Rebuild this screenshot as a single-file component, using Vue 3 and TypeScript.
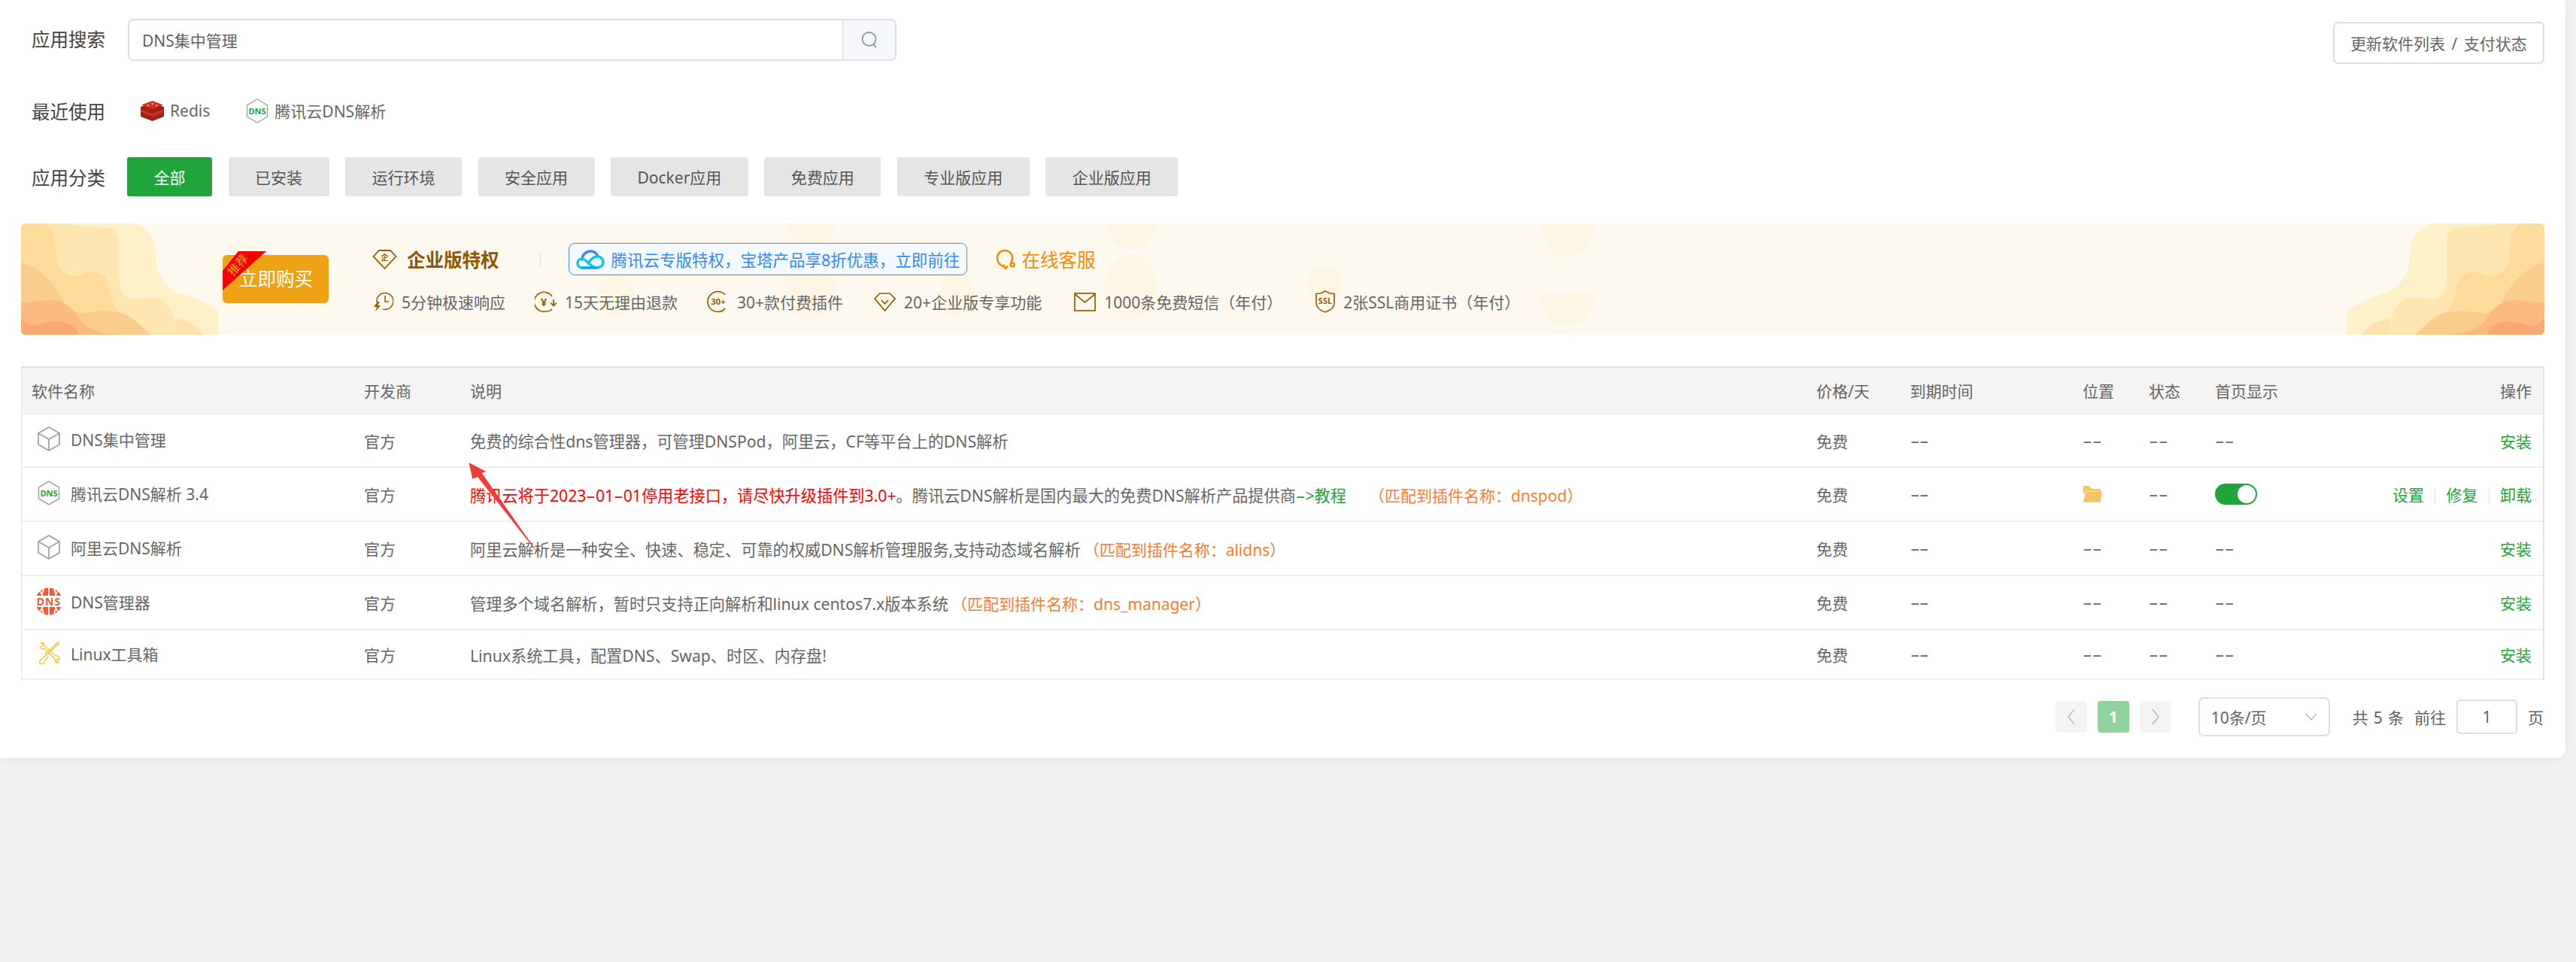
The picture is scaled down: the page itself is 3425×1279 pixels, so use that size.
<script setup lang="ts">
interface Part { text: string; kind?: 'red' | 'green' | 'orange' }
interface Row { icon: 'box' | 'dnsHex' | 'globe' | 'tools'; name: string; parts: Part[]; installed?: boolean }

const categories: string[] = ['全部', '已安装', '运行环境', '安全应用', 'Docker应用', '免费应用', '专业版应用', '企业版应用']
const headers: string[] = ['软件名称', '开发商', '说明', '价格/天', '到期时间', '位置', '状态', '首页显示', '操作']

const rows: Row[] = [
  { icon: 'box', name: 'DNS集中管理', parts: [{ text: '免费的综合性dns管理器，可管理DNSPod，阿里云，CF等平台上的DNS解析' }] },
  {
    icon: 'dnsHex', name: '腾讯云DNS解析 3.4', installed: true,
    parts: [
      { text: '腾讯云将于2023-01-01停用老接口，请尽快升级插件到3.0+', kind: 'red' },
      { text: '。腾讯云DNS解析是国内最大的免费DNS解析产品提供商' },
      { text: '->教程', kind: 'green' },
      { text: '（匹配到插件名称：dnspod）', kind: 'orange' }
    ]
  },
  {
    icon: 'box', name: '阿里云DNS解析',
    parts: [
      { text: '阿里云解析是一种安全、快速、稳定、可靠的权威DNS解析管理服务,支持动态域名解析' },
      { text: '（匹配到插件名称：alidns）', kind: 'orange' }
    ]
  },
  {
    icon: 'globe', name: 'DNS管理器',
    parts: [
      { text: '管理多个域名解析，暂时只支持正向解析和linux centos7.x版本系统' },
      { text: '（匹配到插件名称：dns_manager）', kind: 'orange' }
    ]
  },
  { icon: 'tools', name: 'Linux工具箱', parts: [{ text: 'Linux系统工具，配置DNS、Swap、时区、内存盘!' }] }
]

// The reference font draws a much wider hyphen, so hyphens get their own span.
const pieces = (text: string): string[] => text.split(/(-)/).filter((s) => s !== '')
</script>

<template>
  <div class="panel">
    <div class="search-row">
      <span class="label">应用搜索</span>
      <div class="search-box">
        <input class="search-input" type="text" value="DNS集中管理" />
        <span class="search-addon">
          <svg width="24" height="24" viewBox="0 0 24 24" fill="none" stroke="#8f979f" stroke-width="1.8">
            <circle cx="11.5" cy="11" r="9" />
            <path d="M17.5 18l3.5 4" />
          </svg>
        </span>
      </div>
      <button class="update-btn">更新软件列表 / 支付状态</button>
    </div>

    <div class="recent-row">
      <span class="label">最近使用</span>
      <span class="recent-item redis">
        <svg width="31" height="27" viewBox="0 0 31 27">
          <path d="M15.5 9L31 15v6l-15.500 6L0 21v-6z" fill="#a41e11" />
          <path d="M15.500 5L31 11v4l-15.500 6L0 15v-4z" fill="#c6302b" />
          <path d="M15.500 3L31 8v3l-15.500 6L0 11V8z" fill="#a41e11" />
          <path d="M15.500 0L30 5.500 15.500 11 1 5.500z" fill="#d82c20" />
          <path d="M14 3l3 .5-1.500 2zM20 5l3 1-3 1zM9 5l3 1-3 1z" fill="#fff" />
        </svg>
        Redis
      </span>
      <span class="recent-item tencent">
        <svg width="30" height="33" viewBox="0 0 30 33" fill="none">
          <path d="M15 1l13.500 8v15L15 32 1.500 24V9z" stroke="#a3a3a3" stroke-width="1.400" />
          <rect x="3" y="10" width="24" height="13" fill="#fff" />
          <text x="15" y="20.500" text-anchor="middle" class="dns-hex-text">DNS</text>
        </svg>
        腾讯云DNS解析
      </span>
    </div>

    <div class="category-row">
      <span class="label">应用分类</span>
      <div class="category-list">
        <button v-for="(c, i) in categories" :key="c" class="cat" :class="{ active: i === 0 }">{{ c }}</button>
      </div>
    </div>

    <div class="banner">
      <svg class="decor" width="3355" height="148" viewBox="0 0 3355 148" fill="#fef6e4">
        <ellipse cx="1049" cy="-10" rx="34" ry="45" />
        <ellipse cx="790" cy="95" rx="24" ry="30" />
        <ellipse cx="1243" cy="95" rx="24" ry="30" />
        <ellipse cx="1049" cy="85" rx="34" ry="44" />
        <ellipse cx="1476" cy="-10" rx="35" ry="46" />
        <ellipse cx="1476" cy="85" rx="35" ry="44" />
        <ellipse cx="1733" cy="80" rx="24" ry="24" />
        <ellipse cx="2056" cy="-5" rx="37" ry="50" />
        <path d="M2019 92h74c0 25-16 45-37 45s-37-20-37-45z" />
      </svg>
      <svg v-for="side in ['left', 'right']" :key="side" class="wave" :class="side" width="262" height="148" viewBox="0 0 262 148">
        <path d="M6 0H142C165 0 179 18 179 43C179 70 195 90 222 96C238 102 252 109 262 116V148H6a6 6 0 0 1-6-6V6a6 6 0 0 1 6-6z" fill="#fef1c9" />
        <path d="M55 0C75 3 90 5 106 5C122 5 130 10 130 25V70C130 90 137 101 150 101C160 101 168 97 182 100C198 105 205 122 205 148H6a6 6 0 0 1-6-6V6a6 6 0 0 1 6-6z" fill="#fee6b0" />
        <path d="M205 127C220 127 232 135 243 148H205z" fill="#fde2ad" />
        <path d="M24 0C40 0 46 15 46 36C46 58 56 70 72 70C84 70 88 62 99 65C112 68 115 75 117 88C122 110 135 135 171 148H6a6 6 0 0 1-6-6V6a6 6 0 0 1 6-6z" fill="#fddb9b" />
        <path d="M0 52C25 58 45 80 57 105C65 118 75 120 85 119C105 116 130 112 150 128C160 136 166 142 171 148H6a6 6 0 0 1-6-6z" fill="#fbcd8d" />
        <path d="M0 105C15 106 30 100 48 103C62 106 70 116 79 129C88 140 105 146 126 148H6a6 6 0 0 1-6-6z" fill="#fbba7f" />
        <path d="M0 126C6 134 14 138 21 136C30 132 40 131 48 131C62 131 74 136 76 148H6a6 6 0 0 1-6-6z" fill="#f8a873" />
      </svg>

      <div class="buy">
        <span class="ribbon"></span>
        <span class="ribbon-text">推荐</span>
        立即购买
      </div>

      <div class="perks">
        <div class="perks-top">
          <span class="perk-title">
            <svg width="33" height="26" viewBox="0 0 33 26" fill="none" stroke="#985c00" stroke-width="1.800">
              <path d="M1.500 9L9 1h15l7.500 8L16.500 25z" />
              <text x="16.500" y="14" text-anchor="middle" class="perk-glyph">企</text>
            </svg>
            企业版特权
          </span>
          <span class="divider"></span>
          <span class="tencent-chip">
            <svg width="38" height="26" viewBox="0 0 38 26" fill="none" stroke-width="3.500" stroke-linecap="round">
              <path d="M8 13C8 6 14 2 19.500 2C24 2 27 5 28.500 8" stroke="#2f8df6" />
              <path d="M8 24C4 24 2 21 2 18C2 15 4 12 8 12C13 12 20 24 27 24C32 24 36 21 36 16.500C36 12 32 9 28 9C22 9 19 14 16 18" stroke="#16c7de" />
              <path d="M8 24H27" stroke="#00a9f0" />
            </svg>
            腾讯云专版特权，宝塔产品享8折优惠，立即前往
          </span>
          <span class="service">
            <svg width="27" height="28" viewBox="0 0 27 28" fill="none" stroke="#f78b10" stroke-width="2.600">
              <path d="M12 24C5.500 22 2 17.500 2 12C2 6 6.500 2 12 2C17.500 2 22 6 22 12C22 14 21.500 16 20.500 17.500" stroke-linecap="round" />
              <circle cx="22" cy="21" r="2.500" />
              <path d="M10 21l3 5 3-3" />
            </svg>
            在线客服
          </span>
        </div>
        <div class="perks-bottom">
          <span class="perk">
            <svg width="28" height="28" viewBox="0 0 28 28" fill="none" stroke="#985c00" stroke-width="1.500">
              <path d="M6 15A11 11 0 1 1 14 24" />
              <path d="M17 6v8h5" />
              <path d="M7 14l-5 7h4l-2 6 7-8H7l3-5z" fill="#985c00" stroke="none" />
            </svg>
            5分钟极速响应
          </span>
          <span class="perk">
            <svg width="29" height="29" viewBox="0 0 29 29" fill="none" stroke="#985c00" stroke-width="1.700">
              <path d="M23 7A13 13 0 1 0 15 27C18 27 21 26 23 24" />
              <path d="M25 11v8M21 15.500l4 4 4-4" />
              <text x="12" y="20" text-anchor="middle" class="perk-glyph big">¥</text>
            </svg>
            15天无理由退款
          </span>
          <span class="perk">
            <svg width="29" height="30" viewBox="0 0 29 30" fill="none" stroke="#985c00" stroke-width="1.700">
              <path d="M24 6A13.500 13.500 0 0 0 15 1.500C7 1.500 1 8 1 15C1 23 7 28.500 15 28.500C19 28.500 22 27 24 24" />
              <text x="15" y="19" text-anchor="middle" class="perk-glyph bold">30+</text>
            </svg>
            30+款付费插件
          </span>
          <span class="perk">
            <svg width="29" height="25" viewBox="0 0 29 25" fill="none" stroke="#985c00" stroke-width="1.700">
              <path d="M1 8L8 1h13l7 7-13.500 16z" />
              <path d="M10 10l4.500 5 4.500-5" />
            </svg>
            20+企业版专享功能
          </span>
          <span class="perk">
            <svg width="29" height="25" viewBox="0 0 29 25" fill="none" stroke="#985c00" stroke-width="1.700">
              <rect x="1" y="1" width="27" height="23" />
              <path d="M1 2l13.500 11L28 2" />
            </svg>
            1000条免费短信（年付）
          </span>
          <span class="perk">
            <svg width="26" height="30" viewBox="0 0 26 30" fill="none" stroke="#985c00" stroke-width="1.600">
              <path d="M13 1l6 3 6 .5V17c0 6-6 10-12 12C7 27 1 23 1 17V4.500L7 4z" />
              <text x="13" y="18" text-anchor="middle" class="perk-glyph bold">SSL</text>
            </svg>
            2张SSL商用证书（年付）
          </span>
        </div>
      </div>
    </div>

    <div class="table">
      <div class="row head">
        <span v-for="(h, i) in headers" :key="h" class="cell" :class="{ first: i === 0, end: i === 8 }">{{ h }}</span>
      </div>
      <div v-for="r in rows" :key="r.name" class="row">
        <span class="cell first name">
          <svg v-if="r.icon === 'box'" width="30" height="33" viewBox="0 0 30 33" fill="none" stroke="#a0a0a0" stroke-width="1.700">
            <path d="M15 1l14 8v15l-14 8-14-8V9z" />
            <path d="M1 9l14 8 14-8M15 17v15" />
          </svg>
          <svg v-else-if="r.icon === 'dnsHex'" width="30" height="33" viewBox="0 0 30 33" fill="none">
            <path d="M15 1l13.500 8v15L15 32 1.500 24V9z" stroke="#a3a3a3" stroke-width="1.500" />
            <rect x="3" y="10" width="24" height="13" fill="#fff" />
            <text x="15" y="20.500" text-anchor="middle" class="dns-hex-text">DNS</text>
          </svg>
          <svg v-else-if="r.icon === 'globe'" class="globe" width="36" height="37" viewBox="0 0 36 37" fill="none">
            <circle cx="18" cy="18.500" r="18" fill="#f05a36" />
            <path d="M18 0v37M6 5c6 7 6 20 0 27M30 5c-6 7-6 20 0 27M11 2c-4 10-4 23 0 33M25 2c4 10 4 23 0 33" stroke="#fff" stroke-width="1.800" />
            <rect x="-1" y="11" width="38" height="15" fill="#fff" />
            <text x="18" y="24" text-anchor="middle" class="globe-text">DNS</text>
          </svg>
          <svg v-else class="tools" width="30" height="30" viewBox="0 0 30 30" fill="none" stroke="#f9c02c" stroke-width="1.300">
            <path d="M27 1l1.500 1.500L12 18l-2-1.500zM11.500 17.500L5 24a3 3 0 1 0 3.500 3.500L14 20" />
            <path d="M3 7.500A4 4 0 0 0 8.500 9L23 23a4 4 0 0 0 5 5l-3-3 1-2 3 1a4 4 0 0 0-5-5L9.500 6A4 4 0 0 0 5 1.500l2.500 2.500-1.500 2z" />
          </svg>
          <span class="name-text">{{ r.name }}</span>
        </span>
        <span class="cell">官方</span>
        <span class="cell desc">
          <span v-for="p in r.parts" :key="p.text" :class="p.kind"><template v-for="(s, k) in pieces(p.text)" :key="k"><span v-if="s === '-'" class="hy">-</span><template v-else>{{ s }}</template></template></span>
        </span>
        <span class="cell">免费</span>
        <span class="cell"><span class="hy">-</span><span class="hy">-</span></span>
        <span class="cell">
          <svg v-if="r.installed" class="folder" width="26" height="22" viewBox="0 0 26 22">
            <path d="M1 0h8l3 4h12v6H1z" fill="#f0c566" />
            <path d="M4 7h22l-2 15H1z" fill="#f0c566" stroke="#fbe6b7" stroke-width="1" />
          </svg>
          <template v-else><span class="hy">-</span><span class="hy">-</span></template>
        </span>
        <span class="cell"><span class="hy">-</span><span class="hy">-</span></span>
        <span class="cell">
          <span v-if="r.installed" class="switch"><span class="knob"></span></span>
          <template v-else><span class="hy">-</span><span class="hy">-</span></template>
        </span>
        <span class="cell end">
          <template v-if="r.installed">
            <a class="op">设置</a><i class="sep"></i><a class="op">修复</a><i class="sep"></i><a class="op">卸载</a>
          </template>
          <a v-else class="op">安装</a>
        </span>
      </div>
    </div>

    <div class="pager">
      <span class="page-btn">
        <svg width="12" height="24" viewBox="0 0 12 24" fill="none" stroke="#b0b3b9" stroke-width="1.300"><path d="M10 2L2 12l8 10" /></svg>
      </span>
      <span class="page-btn current">1</span>
      <span class="page-btn">
        <svg width="12" height="24" viewBox="0 0 12 24" fill="none" stroke="#b0b3b9" stroke-width="1.300"><path d="M2 2l8 10-8 10" /></svg>
      </span>
      <div class="page-select">
        <span>10条/页</span>
        <svg width="16" height="10" viewBox="0 0 16 10" fill="none" stroke="#b4b7bd" stroke-width="1.300"><path d="M1 1l7 8 7-8" /></svg>
      </div>
      <span class="total">共 5 条</span>
      <span class="goto">前往</span>
      <input class="page-input" type="text" value="1" />
      <span class="unit">页</span>
    </div>
  </div>

  <svg class="arrow" width="110" height="135" viewBox="0 0 110 135">
    <path d="M1.300 0L24 11.700 18.700 14 98 127 13 19 6.300 21.700z" fill="#f23b3b" />
  </svg>
</template>

<style>
html, body { margin: 0; background: #f0f0f0; }
body { min-height: 1279px; }
</style>

<style scoped>
.panel {
  box-sizing: border-box;
  width: 3411px;
  height: 1008px;
  padding: 25px 28px 0;
  background: #fff;
  border-radius: 0 0 12px 0;
  box-shadow: 0 2px 12px rgba(0, 0, 0, 0.05);
  font-family: "Noto Sans", "Noto Sans CJK SC", sans-serif;
  font-size: 21px;
  color: #666;
}
.label {
  flex: none;
  width: 142px;
  padding-left: 14px;
  box-sizing: border-box;
  font-size: 24.5px;
  color: #444;
}
.search-row { display: flex; align-items: flex-start; height: 56px; }
.search-row .label { line-height: 56px; }
.search-box {
  box-sizing: border-box;
  display: flex;
  width: 1022px;
  height: 56px;
  border: 2px solid #dcdfe6;
  border-radius: 7px;
  overflow: hidden;
}
.search-input {
  flex: 1;
  min-width: 0;
  border: 0;
  outline: 0;
  padding: 0 17px;
  font: inherit;
  color: #606266;
}
.search-addon {
  box-sizing: border-box;
  flex: none;
  width: 70px;
  display: flex;
  align-items: center;
  justify-content: center;
  background: #f5f7fa;
  border-left: 2px solid #e4e7ed;
}
.update-btn {
  margin: 4px 0 0 auto;
  box-sizing: border-box;
  width: 281px;
  height: 56px;
  border: 2px solid #dcdfe6;
  border-radius: 7px;
  background: #fff;
  padding: 0;
  font: inherit;
  word-spacing: 3px;
  color: #666;
}
.recent-row { display: flex; align-items: center; height: 44px; margin-top: 44px; }
.recent-item { display: inline-flex; align-items: center; }
.recent-item.redis { margin-left: 17px; gap: 8px; }
.recent-item.tencent { margin-left: 48px; gap: 8px; }
.category-row { display: flex; align-items: center; margin-top: 40px; }
.category-list { display: flex; gap: 21.5px; margin-left: -1px; }
.cat {
  height: 52px;
  padding: 0 35.5px;
  border: 0;
  border-radius: 3px;
  background: #e5e5e5;
  font: inherit;
  color: #555;
}
.cat.active { background: #20a53a; color: #fff; }
.dns-hex-text { font-size: 11px; font-weight: 700; fill: #20a53a; }
.globe-text { font-size: 14px; font-weight: 700; fill: #f05a36; letter-spacing: 1px; }

.banner {
  position: relative;
  box-sizing: border-box;
  display: flex;
  align-items: flex-start;
  height: 148px;
  margin-top: 36px;
  padding: 26px 0 0 268px;
  background: #fef9ef;
  border-radius: 7px;
}
.decor { position: absolute; left: 0; top: 0; }
.wave { position: absolute; top: 0; }
.wave.left { left: 0; }
.wave.right { right: 0; transform: scaleX(-1); }
.buy {
  position: relative;
  box-sizing: border-box;
  flex: none;
  width: 141px;
  height: 64px;
  margin-top: 16px;
  padding-left: 22px;
  background: #eea216;
  border-radius: 6px;
  color: #fff;
  font-size: 24.500px;
  line-height: 64px;
}
.ribbon {
  position: absolute;
  left: 0;
  top: -5px;
  width: 58px;
  height: 52px;
  background: #f50000;
  clip-path: polygon(36% 0, 100% 0, 0 100%, 0 50%);
}
.ribbon-text {
  position: absolute;
  left: 4px;
  top: 3px;
  color: #f6a623;
  font-size: 15.750px;
  line-height: 20px;
  transform: rotate(-48deg);
}
.perks { position: relative; margin-left: 58px; }
.perks-top { display: flex; align-items: center; height: 43px; }
.perk-title {
  display: inline-flex;
  align-items: center;
  gap: 13px;
  color: #8f5600;
  font-size: 24.500px;
  font-weight: 700;
}
.perk-glyph { font-size: 10px; font-weight: 700; fill: #985c00; stroke: none; }
.perk-glyph.big { font-size: 15px; }
.perk-glyph.bold { font-size: 11px; }
.divider { width: 1px; height: 21px; margin: 0 37px 0 54px; background: #ddd; }
.tencent-chip {
  box-sizing: border-box;
  display: inline-flex;
  align-items: center;
  gap: 9px;
  width: 530px;
  height: 43px;
  padding-left: 9px;
  border: 1.500px solid #3d90f5;
  border-radius: 8px;
  background: #f4f8ff;
  color: #2f8bf5;
  font-size: 21.500px;
  white-space: nowrap;
}
.service {
  display: inline-flex;
  align-items: center;
  gap: 8px;
  margin-left: 38px;
  color: #f78b10;
  font-size: 24.500px;
}
.perks-bottom { display: flex; gap: 39px; margin-top: 20px; }
.perk { display: inline-flex; align-items: center; gap: 11px; height: 30px; white-space: nowrap; }
.perk svg { flex: none; }
.perk:nth-child(4) { margin-left: 2px; }
.perk:nth-child(5) { margin-left: 4px; }
.perk:nth-child(6) { margin-left: 5px; }

.table {
  box-sizing: border-box;
  height: 417px;
  margin-top: 42px;
  border: solid #dfe2e8;
  border-width: 2px 2px 0 1.500px;
}
.row {
  display: grid;
  grid-template-columns: 440px 141px 1790px 124.500px 229.500px 88px 88px 180px 1fr;
  box-sizing: border-box;
  height: 72px;
  border-bottom: 2px solid #ebeef5;
  align-items: center;
}
.row.head {
  height: 62px;
  background: #f4f4f4;
  color: #666;
}
.row:nth-child(2) { height: 71px; }
.row:last-child { height: 66px; }
.cell { padding-left: 15px; white-space: nowrap; min-width: 0; }
.cell.first { padding-left: 13px; }
.cell.end { padding: 0 15px 0 0; text-align: right; }
.name { display: flex; align-items: center; }
.name svg { flex: none; margin: -4px 14px 0 8px; }
.name svg.globe { margin: -4px 11px 0 5px; }
.name-text { margin-top: -3px; }
.desc { font-size: 21.200px; }
.desc .red { color: #ff0000; }
.desc .green { color: #20a53a; margin-right: 26px; }
.desc .orange { color: #ff7a30; margin-left: 4px; font-size: 21px; }
.hy {
  display: inline-block;
  width: 12.500px;
  transform: scaleX(1.850);
  transform-origin: left center;
}
.folder { display: block; }
.switch {
  position: relative;
  display: block;
  width: 56px;
  height: 28px;
  border-radius: 14px;
  background: #20a53a;
}
.knob {
  position: absolute;
  right: 2px;
  top: 2px;
  width: 24px;
  height: 24px;
  border-radius: 50%;
  background: #fff;
}
.op { color: #20a53a; }
.sep {
  display: inline-block;
  width: 1px;
  height: 21px;
  margin: 0 14.250px;
  background: #ddd;
  vertical-align: -4px;
}
.pager {
  display: flex;
  align-items: center;
  justify-content: flex-end;
  height: 52px;
  margin-top: 23px;
  padding-right: 1px;
}
.page-btn {
  display: flex;
  align-items: center;
  justify-content: center;
  width: 42px;
  height: 42px;
  margin-right: 14px;
  border-radius: 4px;
  background: #f4f4f5;
  font-weight: 700;
}
.page-btn.current { background: #90d49d; color: #fff; }
.page-select {
  box-sizing: border-box;
  display: flex;
  align-items: center;
  justify-content: space-between;
  width: 175px;
  height: 52px;
  margin-left: 22px;
  padding: 0 15px;
  border: 2px solid #dcdfe6;
  border-radius: 7px;
  color: #606266;
}
.total { margin-left: 30px; word-spacing: 1.700px; color: #606266; }
.goto { margin-left: 14px; color: #606266; }
.page-input {
  box-sizing: border-box;
  width: 81px;
  height: 46px;
  margin-left: 14px;
  border: 2px solid #dcdfe6;
  border-radius: 5px;
  outline: 0;
  text-align: center;
  font: inherit;
  color: #606266;
}
.unit { margin-left: 14px; color: #606266; }
.arrow { position: absolute; left: 622px; top: 615px; }
</style>
